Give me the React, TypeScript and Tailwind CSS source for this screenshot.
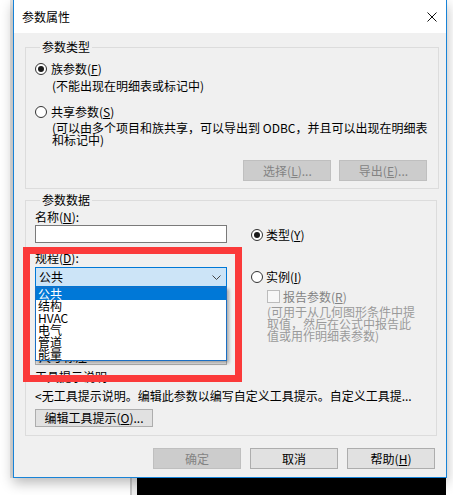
import React from 'react';

// Revit "参数属性" dialog with the 规程 combobox dropped open and a red
// annotation frame drawn over it.

const Radio: React.FC<{ checked?: boolean }> = ({ checked }) => (
  <span className="flex h-[12px] w-[12px] shrink-0 items-center justify-center rounded-full border border-[#333333] bg-white">
    {checked && <span className="h-[6px] w-[6px] rounded-full bg-[#1a1a1a]" />}
  </span>
);

const Btn: React.FC<{ disabled?: boolean; className?: string; children: React.ReactNode }> = ({
  disabled,
  className = '',
  children,
}) => (
  <div
    className={
      disabled
        ? `flex items-center justify-center border border-[#bfbfbf] bg-[#cccccc] leading-[12px] text-[#838383] ${className}`
        : `flex items-center justify-center border border-[#adadad] bg-[#e1e1e1] leading-[12px] text-black ${className}`
    }
  >
    {children}
  </div>
);

const Chevron = () => (
  <svg width="9" height="5" viewBox="0 0 9 5" className="shrink-0">
    <polyline points="0.5,0.5 4.5,4.5 8.5,0.5" fill="none" stroke="#444444" strokeWidth="1" />
  </svg>
);

const disciplines = ['公共', '结构', 'HVAC', '电气', '管道', '能量'];

export default function App() {
  return (
    <div className="relative flex h-[495px] w-[453px] flex-col overflow-hidden bg-white font-['Noto_Sans_CJK_SC',sans-serif] text-[12px] text-black">
      <div className="flex h-[478px] shrink-0">
        {/* window behind, left edge */}
        <div className="flex w-[13px] shrink-0">
          <div className="w-[10px] bg-white" />
          <div className="w-[3px] bg-[#e3e3e3]" />
        </div>

        {/* dialog */}
        <div className="relative z-10 flex w-[434px] shrink-0 flex-col border-x border-b border-[#1883d7] bg-[#f0f0f0] shadow-[0_5px_12px_rgba(0,0,0,0.28)]">
          {/* title bar */}
          <div className="flex h-[33px] shrink-0 items-center justify-between bg-white pl-[8px] pr-[9px]">
            <span className="leading-[12px]">参数属性</span>
            <svg width="10" height="10" viewBox="0 0 10 10">
              <line x1="0.5" y1="0.5" x2="9.5" y2="9.5" stroke="#111111" strokeWidth="1" />
              <line x1="9.5" y1="0.5" x2="0.5" y2="9.5" stroke="#111111" strokeWidth="1" />
            </svg>
          </div>

          <div className="flex flex-col pl-[11px] pr-[9px] pt-[8px]">
            {/* 参数类型 */}
            <fieldset className="border border-[#dcdcdc] pb-[7px] pl-[9px] pr-[11px]">
              <legend className="ml-[5px] px-[2px] leading-[12px]">参数类型</legend>
              <div className="mt-[10px] flex h-[12px] items-center gap-[4px]">
                <Radio checked />
                <span className="leading-[12px]">
                  族参数(<u>F</u>)
                </span>
              </div>
              <div className="mt-[5px] pl-[17px] leading-[12px]">(不能出现在明细表或标记中)</div>
              <div className="mt-[14px] flex h-[12px] items-center gap-[4px]">
                <Radio />
                <span className="leading-[12px]">
                  共享参数(<u>S</u>)
                </span>
              </div>
              <div className="mt-[4px] pl-[17px] leading-[12px]">
                <div className="whitespace-nowrap">(可以由多个项目和族共享，可以导出到 ODBC，并且可以出现在明细表</div>
                <div className="whitespace-nowrap">和标记中)</div>
              </div>
              <div className="mt-[14px] flex justify-end gap-[8px]">
                <Btn disabled className="h-[21px] w-[88px]">
                  选择(<u>L</u>)...
                </Btn>
                <Btn disabled className="h-[21px] w-[88px]">
                  导出(<u>E</u>)...
                </Btn>
              </div>
            </fieldset>

            {/* 参数数据 */}
            <fieldset className="mt-[5px] border border-[#dcdcdc] pb-[8px] pl-[9px] pr-[11px]">
              <legend className="ml-[5px] px-[2px] leading-[12px]">参数数据</legend>
              <div className="flex gap-[24px]">
                <div className="flex w-[192px] shrink-0 flex-col">
                  <div className="mt-[5px] leading-[12px]">
                    名称(<u>N</u>):
                  </div>
                  <div className="mt-[2px] h-[18px] border border-[#7a7a7a] bg-white" />
                  <div className="mt-[9px] leading-[12px]">
                    规程(<u>D</u>):
                  </div>
                  <div className="relative mt-[3px]">
                    <div className="flex h-[20px] items-center justify-between border border-[#0078d7] bg-[#cce4f7] pl-[3px] pr-[5px] leading-[12px]">
                      <span>公共</span>
                      <Chevron />
                    </div>
                    {/* open drop-down list */}
                    <div className="absolute left-0 top-full z-10 flex w-[192px] flex-col border border-[#1a6fc4] bg-white shadow-[2px_2px_3px_rgba(0,0,0,0.3)]">
                      {disciplines.map((d, i) => (
                        <div
                          key={d}
                          className={
                            i === 0
                              ? 'h-[12px] bg-[#0078d7] pl-[2px] leading-[12px] text-white'
                              : 'h-[12px] pl-[2px] leading-[12px] text-black'
                          }
                        >
                          {d}
                        </div>
                      ))}
                    </div>
                  </div>
                  {/* fields hidden behind the open list */}
                  <div className="invisible mt-[4px] leading-[12px]">参数类型(T):</div>
                  <div className="mt-[3px] h-[20px] border border-[#acacac] bg-[#e5e5e5]" />
                  <div className="invisible mt-[4px] leading-[12px]">参数分组方式(G):</div>
                  <div className="mt-[3px] flex h-[20px] items-center border border-[#acacac] bg-[#e5e5e5] pl-[3px] pt-[3px] leading-[12px]">
                    <span>尺寸标注</span>
                  </div>
                </div>

                <div className="flex flex-col">
                  <div className="mt-[23px] flex h-[12px] items-center gap-[3px]">
                    <Radio checked />
                    <span className="leading-[12px]">
                      类型(<u>Y</u>)
                    </span>
                  </div>
                  <div className="mt-[30px] flex h-[12px] items-center gap-[3px]">
                    <Radio />
                    <span className="leading-[12px]">
                      实例(<u>I</u>)
                    </span>
                  </div>
                  <div className="mt-[7px] flex items-center gap-[3px] pl-[16px]">
                    <span className="h-[13px] w-[13px] border border-[#bcbcbc] bg-[#f7f7f7]" />
                    <span className="leading-[12px] text-[#838383]">
                      报告参数(<u>R</u>)
                    </span>
                  </div>
                  <div className="mt-[3px] pl-[16px] leading-[12px] text-[#9a9a9a]">
                    <div className="whitespace-nowrap">(可用于从几何图形条件中提</div>
                    <div className="whitespace-nowrap">取值，然后在公式中报告此</div>
                    <div className="whitespace-nowrap">值或用作明细表参数)</div>
                  </div>
                </div>
              </div>

              <div className="mt-[6px] leading-[12px]">工具提示说明</div>
              <div className="mt-[7px] whitespace-nowrap leading-[12px]">
                &lt;无工具提示说明。编辑此参数以编写自定义工具提示。自定义工具提...
              </div>
              <Btn className="mt-[7px] h-[18px] w-[118px]">
                编辑工具提示(<u>O</u>)...
              </Btn>
            </fieldset>

            {/* footer buttons */}
            <div className="mt-[12px] flex justify-end gap-[9px] pr-[2px]">
              <Btn disabled className="h-[21px] w-[88px]">
                确定
              </Btn>
              <Btn className="h-[21px] w-[88px]">取消</Btn>
              <Btn className="h-[21px] w-[88px]">
                帮助(<u>H</u>)
              </Btn>
            </div>
          </div>
        </div>

        <div className="flex-1 bg-white" />
      </div>

      {/* desktop below the dialog */}
      <div className="flex flex-1">
        <div className="w-[130px] bg-white" />
        <div className="w-[2px] bg-[#c8c8c8]" />
        <div className="w-[5px] bg-[#efefef]" />
        <div className="w-[309px] bg-black" />
        <div className="flex-1 bg-white" />
      </div>

      {/* red annotation frame */}
      <div className="absolute left-[23px] top-[247px] z-20 h-[135px] w-[219px] border-[7px] border-[#fb3a3a]" />
    </div>
  );
}
